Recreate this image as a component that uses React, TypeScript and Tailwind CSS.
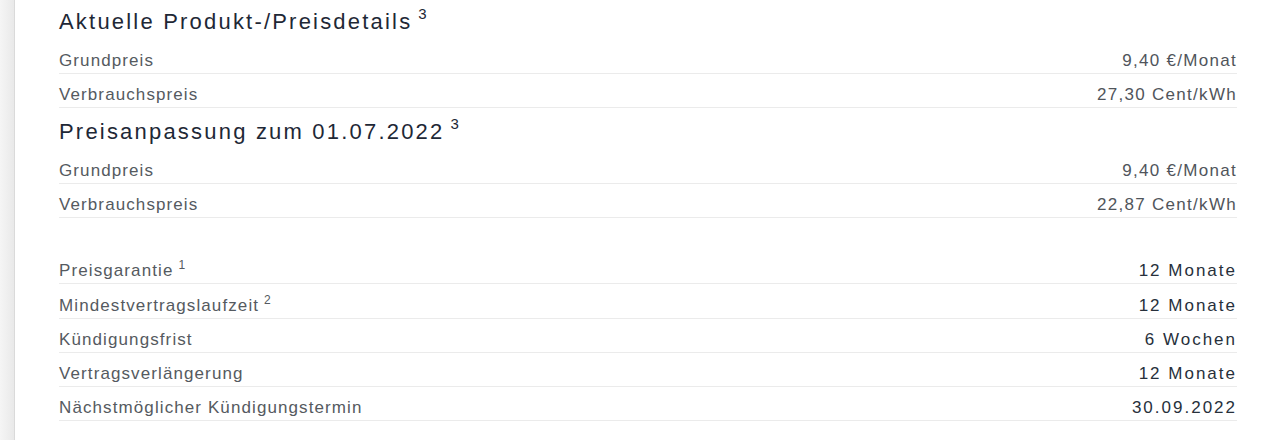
import React from "react";

type Row = { label: string; sup?: string; value: string };

const current: Row[] = [
  { label: "Grundpreis", value: "9,40 €/Monat" },
  { label: "Verbrauchspreis", value: "27,30 Cent/kWh" },
];

const adjusted: Row[] = [
  { label: "Grundpreis", value: "9,40 €/Monat" },
  { label: "Verbrauchspreis", value: "22,87 Cent/kWh" },
];

const terms: Row[] = [
  { label: "Preisgarantie", sup: "1", value: "12 Monate" },
  { label: "Mindestvertragslaufzeit", sup: "2", value: "12 Monate" },
  { label: "Kündigungsfrist", value: "6 Wochen" },
  { label: "Vertragsverlängerung", value: "12 Monate" },
  { label: "Nächstmöglicher Kündigungstermin", value: "30.09.2022" },
];

function Heading({ children }: { children: React.ReactNode }) {
  return (
    <h2 className="text-[22px] leading-[28px] tracking-[2.2px] text-[#1e2836] font-normal">
      {children}
      <sup className="ml-[6px] text-[15px] tracking-normal relative -top-[10px]">3</sup>
    </h2>
  );
}

function DetailRow({ row, strong }: { row: Row; strong?: boolean }) {
  return (
    <div
      className={
        "flex items-end justify-between border-b border-[#ebebeb] pb-[2px] text-[17px] leading-[20px] " +
        (strong ? "h-[34.25px]" : "h-[34px]")
      }
    >
      <span className="tracking-[1.1px] text-[#555a60]">
        {row.label}
        {row.sup && (
          <sup className="ml-[5px] text-[12px] tracking-normal relative -top-[7px]">{row.sup}</sup>
        )}
      </span>
      <span
        className={
          strong
            ? "tracking-[2px] text-[#27303b]"
            : "tracking-[1.3px] text-[#50555b]"
        }
      >
        {row.value}
      </span>
    </div>
  );
}

export default function App() {
  return (
    <div
      className="flex min-h-[440px] w-full bg-white"
      style={{ fontFamily: '"Liberation Sans", Arial, sans-serif' }}
    >
      <div className="w-[15px] shrink-0 bg-gradient-to-r from-[#f5f5f5] to-[#e9e9e9] border-r border-[#dadada]" />
      <div className="flex-1 pl-[44px] pr-[43px] pt-[8px]">
        <Heading>Aktuelle Produkt-/Preisdetails</Heading>
        <div className="mt-[4px]">
          {current.map((r) => (
            <DetailRow key={r.label} row={r} />
          ))}
        </div>

        <div className="mt-[10px]">
          <Heading>Preisanpassung zum 01.07.2022</Heading>
        </div>
        <div className="mt-[4px]">
          {adjusted.map((r) => (
            <DetailRow key={r.label} row={r} />
          ))}
        </div>

        <div className="mt-[32px]">
          {terms.map((r) => (
            <DetailRow key={r.label} row={r} strong />
          ))}
        </div>
      </div>
    </div>
  );
}
